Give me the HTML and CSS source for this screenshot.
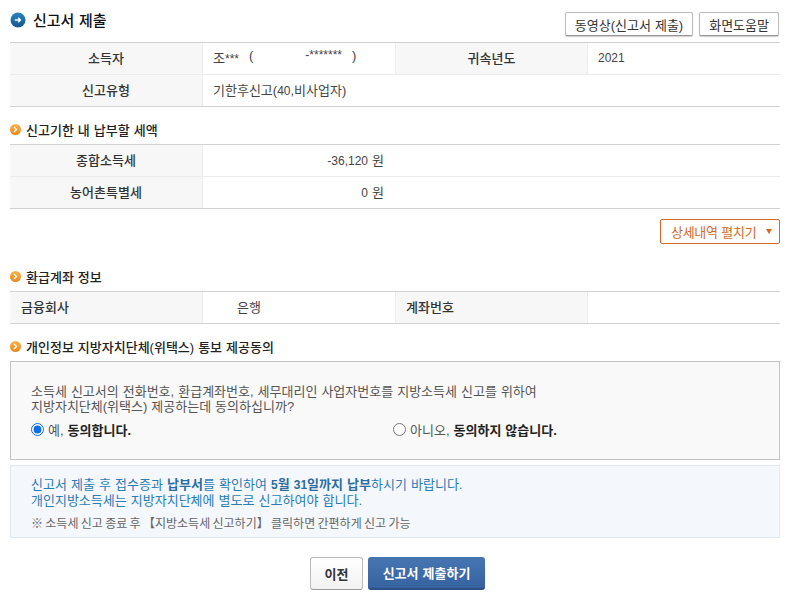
FILE: index.html
```html
<!DOCTYPE html>
<html lang="ko">
<head>
<meta charset="utf-8">
<title>신고서 제출</title>
<link rel="stylesheet" href="styles.css">
</head>
<body>
<main class="page">
  <header class="title-bar">
    <h1 class="page-title">
      <svg class="title-icon" width="16" height="16" viewBox="0 0 16 16"><defs><linearGradient id="gb" x1="0" y1="0" x2="0" y2="1"><stop offset="0" stop-color="#2a82bd"/><stop offset="1" stop-color="#14598f"/></linearGradient></defs><circle cx="8" cy="8" r="7.5" fill="url(#gb)"/><path d="M4.8 8h5.6M8.2 5.8 10.5 8l-2.3 2.2" fill="none" stroke="#fff" stroke-width="1.3"/></svg>
      <span class="title-text">신고서 제출</span>
    </h1>
    <div class="title-actions">
      <button class="btn-grey">동영상(신고서 제출)</button>
      <button class="btn-grey">화면도움말</button>
    </div>
  </header>

  <table class="grid">
    <colgroup><col class="c1"><col class="c2"><col class="c3"><col class="c4"></colgroup>
    <tr>
      <th>소득자</th>
      <td><span class="owner"><span>조<span class="num">***</span></span><span>(</span><span class="rrn num">-*******</span><span>)</span></span></td>
      <th>귀속년도</th>
      <td><span class="num">2021</span></td>
    </tr>
    <tr>
      <th>신고유형</th>
      <td colspan="3">기한후신고(<span class="num">40</span>,비사업자)</td>
    </tr>
  </table>

  <h2 class="sub-title first">
    <svg class="bullet" width="11" height="11" viewBox="0 0 11 11"><defs><linearGradient id="go" x1="0" y1="0" x2="0" y2="1"><stop offset="0" stop-color="#fbb24a"/><stop offset="1" stop-color="#e98718"/></linearGradient></defs><circle cx="5.5" cy="5.5" r="5.5" fill="url(#go)"/><path d="M4 3l2.5 2.5L4 8" fill="none" stroke="#fff" stroke-width="1.4"/></svg>
    신고기한 내 납부할 세액
  </h2>
  <table class="grid half">
    <colgroup><col class="c1"><col class="c2"><col class="c5"></colgroup>
    <tr><th>종합소득세</th><td class="amount"><span class="num">-36,120</span> 원</td><td></td></tr>
    <tr><th>농어촌특별세</th><td class="amount"><span class="num">0</span> 원</td><td></td></tr>
  </table>

  <div class="detail-row"><button class="btn-orange">상세내역 펼치기 <span class="arrow"></span></button></div>

  <h2 class="sub-title refund">
    <svg class="bullet" width="11" height="11" viewBox="0 0 11 11"><circle cx="5.5" cy="5.5" r="5.5" fill="url(#go)"/><path d="M4 3l2.5 2.5L4 8" fill="none" stroke="#fff" stroke-width="1.4"/></svg>
    환급계좌 정보
  </h2>
  <table class="grid">
    <colgroup><col class="c1"><col class="c2"><col class="c3"><col class="c4"></colgroup>
    <tr>
      <th class="left">금융회사</th>
      <td class="bank">은행</td>
      <th class="left">계좌번호</th>
      <td></td>
    </tr>
  </table>

  <h2 class="sub-title consent">
    <svg class="bullet" width="11" height="11" viewBox="0 0 11 11"><circle cx="5.5" cy="5.5" r="5.5" fill="url(#go)"/><path d="M4 3l2.5 2.5L4 8" fill="none" stroke="#fff" stroke-width="1.4"/></svg>
    개인정보 지방자치단체(위택스) 통보 제공동의
  </h2>
  <section class="consent-box">
    <p>소득세 신고서의 전화번호, 환급계좌번호, 세무대리인 사업자번호를 지방소득세 신고를 위하여<br>지방자치단체(위택스) 제공하는데 동의하십니까?</p>
    <div class="choices">
      <label class="choice"><input type="radio" name="agree" checked> <span>예, <b>동의합니다.</b></span></label>
      <label class="choice"><input type="radio" name="agree"> <span>아니오, <b>동의하지 않습니다.</b></span></label>
    </div>
  </section>

  <section class="notice">
    <p class="notice-main">신고서 제출 후 접수증과 <b>납부서</b>를 확인하여 <b><span class="num">5</span>월 <span class="num">31</span>일까지 납부</b>하시기 바랍니다.<br>개인지방소득세는 지방자치단체에 별도로 신고하여야 합니다.</p>
    <p class="notice-sub">※ 소득세 신고 종료 후 【지방소득세 신고하기】 클릭하면 간편하게 신고 가능</p>
  </section>

  <div class="actions">
    <button class="btn-prev">이전</button>
    <button class="btn-submit">신고서 제출하기</button>
  </div>
</main>
</body>
</html>
```
FILE: styles.css
```css
* { box-sizing: border-box; }
html, body { margin: 0; padding: 0; background: #fff; }
body {
  font-family: "Liberation Sans", "Noto Sans CJK KR", sans-serif;
  font-size: 13px;
  word-spacing: 0.4px;
  color: #444;
}
.page { width: 790px; height: 599px; padding: 0 10px; overflow: hidden; }
button { font-family: inherit; word-spacing: inherit; cursor: pointer; }
.num { font-size: 12px; }

.title-bar { display: flex; justify-content: space-between; align-items: flex-start; height: 42px; padding-top: 12px; }
.page-title { display: flex; align-items: center; gap: 7px; margin: 0; height: 16px; font-size: 15px; font-weight: 500; color: #111; }
.title-icon { display: block; }
.title-text { margin-top: -1px; }
.title-actions { display: flex; gap: 6px; margin-right: 1px; }
.btn-grey {
  height: 24px; padding: 0 9px; font-size: 13px; color: #333;
  background: #fff; border: 1px solid #bbb; border-bottom-color: #999; border-radius: 2px;
  box-shadow: 0 1px 1px #ccc;
}

.grid { width: 770px; table-layout: fixed; border-collapse: separate; border-spacing: 0; border-top: 1px solid #d2d2d2; border-bottom: 1px solid #d2d2d2; }
.c1 { width: 193px; }
.c2 { width: 192px; }
.c3 { width: 193px; }
.c4 { width: 192px; }
.c5 { width: 385px; }
.grid th, .grid td { height: 32px; padding: 0 10px 2px; font-size: 13px; border-bottom: 1px solid #ececec; }
.grid tr:last-child th, .grid tr:last-child td { border-bottom: 0; height: 31px; }
.grid th { background: #f7f7f7; font-weight: 500; color: #333; text-align: center; border-right: 1px solid #ececec; }
.grid td + th { border-left: 1px solid #ececec; }
.grid th.left { text-align: left; }
.grid th.left:first-child { padding-left: 11px; }
.grid td { background: #fff; text-align: left; }
.grid td.amount { text-align: right; padding: 0 11px 2px 0; color: #444; }
.grid td.bank { padding-left: 34px; }
.owner { display: flex; }
.owner span:nth-child(2) { margin-left: 10px; }
.rrn { margin-left: 52px; }
.owner span:nth-child(4) { margin-left: 10px; }

.sub-title { display: flex; align-items: center; gap: 5px; margin: 0; height: 16px; font-size: 13px; font-weight: 500; color: #222; }
.bullet { display: block; }
.sub-title.first { margin: 14px 0 7px; }
.detail-row { display: flex; justify-content: flex-end; margin-top: 10px; }
.btn-orange {
  height: 25px; width: 120px; padding: 0 0 0 10px; font-size: 13px; letter-spacing: -0.3px; font-weight: 400; color: #d2691e;
  background: #fff; border: 1px solid #cf6a25; border-radius: 2px;
  display: flex; align-items: center; gap: 10px;
}
.arrow { width: 0; height: 0; border-left: 3.5px solid transparent; border-right: 3.5px solid transparent; border-top: 5px solid #cf6a25; }
.sub-title.refund { margin: 24px 0 7px; }
.sub-title.consent { margin: 14px 0 7px; }

.consent-box { height: 99px; padding: 22px 20px 0; background: #f9f9f9; border: 1px solid #c4c4c4; }
.consent-box p { margin: 0; line-height: 15px; color: #555; }
.choices { display: grid; grid-template-columns: 362px 1fr; margin-top: 6px; }
.choice { display: flex; align-items: center; gap: 4px; color: #555; }
.choice input { margin: 0; width: 13px; height: 13px; accent-color: #0b6fe8; }
.choice b { color: #222; font-weight: 700; }

.notice { height: 73px; margin-top: 5px; padding: 11px 20px 0; background: #f4f7fc; border: 1px solid #e1e8f0; }
.notice p { margin: 0; }
.notice-main { line-height: 16px; word-spacing: 0.5px; color: #2a7cb6; }
.notice-main b { font-weight: 700; color: #2d6c9e; }
.notice-sub { margin-top: 5px !important; font-size: 12px; word-spacing: -1px; color: #666; }

.actions { display: flex; justify-content: center; gap: 5px; margin-top: 19px; padding-left: 5px; }
.btn-prev {
  width: 53px; height: 33px; font-size: 13px; font-weight: 700; color: #333;
  background: linear-gradient(#fff, #f2f2f2); border: 1px solid #bbb; border-bottom-color: #999; border-radius: 3px;
}
.btn-submit {
  width: 117px; height: 33px; font-size: 13px; font-weight: 700; color: #fff;
  background: linear-gradient(#4676b2, #36639f); border: 0; border-bottom: 2px solid #2a4f80; border-radius: 3px;
}
```
